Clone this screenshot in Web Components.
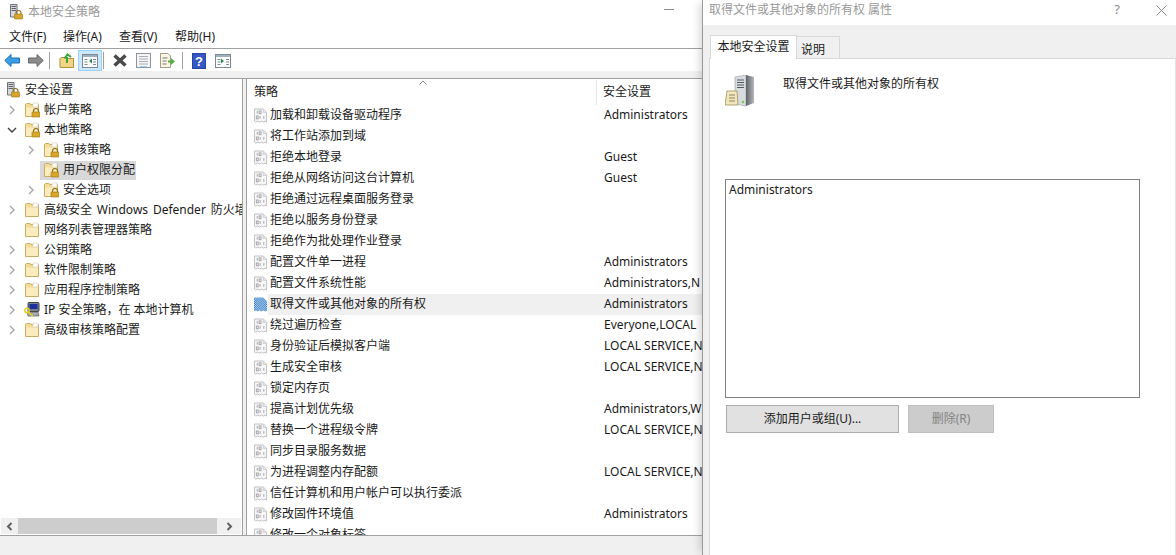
<!DOCTYPE html>
<html lang="zh-CN">
<head>
<meta charset="utf-8">
<title>本地安全策略</title>
<style>
  html, body { margin: 0; height: 100%; overflow: hidden; background: #fff; }
  body { font: 12px/1.2 "Noto Sans", "Noto Sans CJK SC", sans-serif; color: #1a1a1a; }
</style>
</head>
<body>

<secpol-window>
  <tree-row icon="server">安全设置</tree-row>
  <tree-row level="1" arrow="right" icon="lockfolder">帐户策略</tree-row>
  <tree-row level="1" arrow="down" icon="lockfolder">本地策略</tree-row>
  <tree-row level="2" arrow="right" icon="lockfolder">审核策略</tree-row>
  <tree-row level="2" icon="lockfolder" selected>用户权限分配</tree-row>
  <tree-row level="2" arrow="right" icon="lockfolder">安全选项</tree-row>
  <tree-row level="1" arrow="right" icon="folder" style="word-spacing:1.7px">高级安全 Windows Defender 防火墙</tree-row>
  <tree-row level="1" icon="folder">网络列表管理器策略</tree-row>
  <tree-row level="1" arrow="right" icon="folder">公钥策略</tree-row>
  <tree-row level="1" arrow="right" icon="folder">软件限制策略</tree-row>
  <tree-row level="1" arrow="right" icon="folder">应用程序控制策略</tree-row>
  <tree-row level="1" arrow="right" icon="ipsec">IP 安全策略，在 本地计算机</tree-row>
  <tree-row level="1" arrow="right" icon="folder">高级审核策略配置</tree-row>

  <policy-row slot="rows">加载和卸载设备驱动程序<span slot="value">Administrators</span></policy-row>
  <policy-row slot="rows">将工作站添加到域</policy-row>
  <policy-row slot="rows">拒绝本地登录<span slot="value">Guest</span></policy-row>
  <policy-row slot="rows">拒绝从网络访问这台计算机<span slot="value">Guest</span></policy-row>
  <policy-row slot="rows">拒绝通过远程桌面服务登录</policy-row>
  <policy-row slot="rows">拒绝以服务身份登录</policy-row>
  <policy-row slot="rows">拒绝作为批处理作业登录</policy-row>
  <policy-row slot="rows">配置文件单一进程<span slot="value">Administrators</span></policy-row>
  <policy-row slot="rows">配置文件系统性能<span slot="value">Administrators,N</span></policy-row>
  <policy-row slot="rows" selected>取得文件或其他对象的所有权<span slot="value">Administrators</span></policy-row>
  <policy-row slot="rows">绕过遍历检查<span slot="value">Everyone,LOCAL</span></policy-row>
  <policy-row slot="rows">身份验证后模拟客户端<span slot="value">LOCAL SERVICE,N</span></policy-row>
  <policy-row slot="rows">生成安全审核<span slot="value">LOCAL SERVICE,N</span></policy-row>
  <policy-row slot="rows">锁定内存页</policy-row>
  <policy-row slot="rows">提高计划优先级<span slot="value">Administrators,W</span></policy-row>
  <policy-row slot="rows">替换一个进程级令牌<span slot="value">LOCAL SERVICE,N</span></policy-row>
  <policy-row slot="rows">同步目录服务数据</policy-row>
  <policy-row slot="rows">为进程调整内存配额<span slot="value">LOCAL SERVICE,N</span></policy-row>
  <policy-row slot="rows">信任计算机和用户帐户可以执行委派</policy-row>
  <policy-row slot="rows">修改固件环境值<span slot="value">Administrators</span></policy-row>
  <policy-row slot="rows">修改一个对象标签</policy-row>
</secpol-window>

<prop-dialog></prop-dialog>

<script>
const lock = (x, y) => `
  <path d="M${x + 1.5} ${y + 3}v-1a2.5 2.5 0 0 1 5 0v1" fill="none" stroke="#8a6d1c" stroke-width="1.1"/>
  <rect x="${x}" y="${y + 3}" width="8" height="5" rx=".5" fill="#d9a62a" stroke="#9a7412" stroke-width=".6"/>`;

const folderBody = `
  <path d="M1.5 4.5V14.5H14.5V2.5H7L5.8 1.5H2.5L1.5 2.5Z" fill="#f3dc9a" stroke="#c9ab62"/>
  <path d="M2 5.5H14V14H2Z" fill="#fbecbd"/>
  <path d="M9 1h5v4H9z" fill="#fff" stroke="#d6cfb4" stroke-width=".6"/>`;

const ICONS = {
  folder: `<svg width="16" height="16" viewBox="0 0 16 16">${folderBody}</svg>`,
  lockfolder: `<svg width="16" height="16" viewBox="0 0 16 16">${folderBody}${lock(8, 7)}</svg>`,
  server: `<svg width="16" height="16" viewBox="0 0 16 16">
    <path d="M2.5 .5H9V13H2.5Z" fill="#d5d8dc" stroke="#6f7479"/>
    <path d="M3.5 2.5h4.5M3.5 4.5h4.5M3.5 6.5h4.5" stroke="#5f6469"/>${lock(6.5, 7)}</svg>`,
  ipsec: `<svg width="16" height="16" viewBox="0 0 16 16">
    <rect x="4" y=".5" width="11" height="9" rx="1" fill="#7b8088" stroke="#3f4348"/>
    <rect x="5.5" y="2" width="8" height="5" fill="#1c2f9c"/>
    <path d="M3 10h11l1 4H4Z" fill="#a9acaf" stroke="#55585c" stroke-width=".7"/>
    <circle cx="3" cy="8.5" r="2.2" fill="none" stroke="#e6cf1f" stroke-width="1.5"/>
    <path d="M4.5 10l4.5 4.5" stroke="#e6cf1f" stroke-width="1.6"/></svg>`,
  policy: `<svg width="15" height="16" viewBox="0 0 15 16">
    <path d="M.5 .5H10L13.5 4V14.5L12 13.5 10 14.5 8 13.5 6 14.5 4 13.5 2 14.5 .5 13.5Z" fill="#f7f7f8" stroke="#bcbcc0"/>
    <path d="M9.8 .8V4.2H13.2" fill="#e6e6e8" stroke="#c4c4c8" stroke-width=".7"/>
    <g fill="none" stroke="#a2a2a8"><path d="M3.5 2.5v3"/><rect x="5.5" y="2.5" width="2" height="3"/><rect x="2.5" y="8" width="2" height="3"/><path d="M6.5 8v3"/><path d="M10.5 8v3"/></g></svg>`,
  policySelected: `<svg width="15" height="16" viewBox="0 0 15 16">
    <defs><pattern id="chk" width="2" height="2" patternUnits="userSpaceOnUse"><rect width="2" height="2" fill="#cfe4f5"/><rect width="1" height="1" fill="#1f6fbf"/><rect x="1" y="1" width="1" height="1" fill="#1f6fbf"/></pattern></defs>
    <path d="M0 0H10L14 4V14.5L12 15 10 14 8 15 6 14 4 15 2 14 0 15Z" fill="url(#chk)"/></svg>`
};

class SecpolWindow extends HTMLElement {
  constructor() {
    super();
    this.attachShadow({ mode: 'open' }).innerHTML = `
    <style>
      :host { position: absolute; left: 0; top: 0; width: 702px; height: 555px; display: flex; flex-direction: column; background: #f0f0f0; overflow: hidden; }
      .title { height: 25px; flex: none; background: #fff; display: flex; align-items: center; padding-left: 8px; gap: 4px; color: #999; position: relative; }
      .title svg { margin-top: -2px; }
      .title .min { position: absolute; left: 664px; top: 9px; width: 10px; height: 1px; background: #8c8c8c; }
      .main { flex: 1; min-height: 0; display: flex; gap: 3px; border-top: 1px solid #a0a0a0; margin-top: 7px; border-bottom: 1px solid #a0a0a0; margin-bottom: 19px; }
      .tree { width: 242px; flex: none; border-right: 1px solid #a0a0a0; background: #fff; display: flex; flex-direction: column; min-height: 0; }
      .nodes { flex: 1; min-height: 0; overflow: hidden; padding-top: 1px; }
      .list { flex: 1; min-width: 0; border-left: 1px solid #a0a0a0; background: #fff; display: flex; flex-direction: column; overflow: hidden; padding-top: 1px; }
      .head { flex: none; height: 25px; display: flex; position: relative; color: #1a1a1a; }
      .head div { display: flex; align-items: center; padding-bottom: 1px; box-sizing: border-box; }
      .head .c1 { width: 350px; padding-left: 7px; border-right: 1px solid #e5e5e5; }
      .head .c2 { padding-left: 6px; }
      .head svg { position: absolute; left: 172px; top: 0; }
      .rows { flex: 1; min-height: 0; overflow: hidden; }
    </style>
    <div class="title">
      <svg width="16" height="16" viewBox="0 0 16 16">
        <path d="M2.5 .5H9V13H2.5Z" fill="#d5d8dc" stroke="#6f7479"/>
        <path d="M3.5 2.5h4.5M3.5 4.5h4.5M3.5 6.5h4.5" stroke="#5f6469"/>
        <path d="M8 10V9a2.5 2.5 0 0 1 5 0v1" fill="none" stroke="#8a6d1c" stroke-width="1.1"/>
        <rect x="6.5" y="10" width="8" height="5" rx=".5" fill="#d9a62a" stroke="#9a7412" stroke-width=".6"/>
      </svg>
      本地安全策略<span class="min"></span>
    </div>
    <menu-bar></menu-bar>
    <tool-bar></tool-bar>
    <div class="main">
      <div class="tree">
        <div class="nodes"><slot></slot></div>
        <h-scroll></h-scroll>
      </div>
      <div class="list">
        <div class="head">
          <div class="c1">策略</div><div class="c2">安全设置</div>
          <svg width="8" height="5" viewBox="0 0 8 5"><path d="M.5 4.5L4 1l3.5 3.5" fill="none" stroke="#8a8a8a"/></svg>
        </div>
        <div class="rows"><slot name="rows"></slot></div>
      </div>
    </div>`;
  }
}

class MenuBar extends HTMLElement {
  constructor() {
    super();
    this.attachShadow({ mode: 'open' }).innerHTML = `
    <style>
      :host { display: flex; flex: none; height: 24px; box-sizing: border-box; padding: 2px 0 0 9px; align-items: center; background: #fff; border-bottom: 1px solid #a0a0a0; }
      span { width: 56px; }
      span:first-of-type { width: 54px; }
    </style>
    <span>文件(F)</span><span>操作(A)</span><span>查看(V)</span><span>帮助(H)</span>`;
  }
}

class ToolBar extends HTMLElement {
  constructor() {
    super();
    const pane = arrow => `<svg width="16" height="14" viewBox="0 0 16 14">
      <rect x=".5" y=".5" width="15" height="13" fill="#fff" stroke="#7d8a96"/>
      <path d="M1 1h14v2H1z" fill="#9db0c2"/>
      <path d="M2.5 5.5h3M2.5 8h3M2.5 10.5h3M11 5.5h3M11 8h3M11 10.5h3" stroke="#7d8a96"/>${arrow}</svg>`;
    this.attachShadow({ mode: 'open' }).innerHTML = `
    <style>
      :host { display: flex; flex: none; height: 22px; background: #fff; align-items: flex-end; }
      .b { height: 21px; width: 24px; flex: none; display: flex; align-items: center; justify-content: center; box-sizing: border-box; }
      .w23 { width: 23px; }
      .s { width: 1px; height: 17px; background: #a0a0a0; flex: none; margin: 0 5px 2px 2px; }
      .s.b2 { margin-left: 1px; margin-right: 4px; }
      .s.b3 { margin-left: 3px; margin-right: 4px; }
      .on { background: #cce8ff; border: 1px solid #99d1ff; }
    </style>
    <div class="b"><svg width="16" height="13" viewBox="0 0 16 13"><path d="M7 .5L.8 6.5 7 12.5V9h8.5V4H7Z" fill="#3aa0e6" stroke="#1a6fb5"/></svg></div>
    <div class="b w23"><svg width="16" height="13" viewBox="0 0 16 13"><path d="M9 .5l6.2 6L9 12.5V9H.5V4H9Z" fill="#8b8b8b" stroke="#666"/></svg></div>
    <span class="s"></span>
    <div class="b w23"><svg width="16" height="15" viewBox="0 0 16 15"><path d="M1 5.5V14.5H14.5V5.5H7L6 4.5H2Z" fill="#f3d684" stroke="#b2913f"/><path d="M8 10V4M5.5 5.5L8.5 1.5 12 4" fill="none" stroke="#3da33d" stroke-width="2"/></svg></div>
    <div class="b on">${pane('<path d="M10 4.5v5L7 7Z" fill="#2c8f4b"/>')}</div>
    <span class="s b2"></span>
    <div class="b"><svg width="16" height="15" viewBox="0 0 16 15"><path d="M2.5 2.5l11 10M13.5 2.5l-11 10" stroke="#4a4a4a" stroke-width="3.6"/></svg></div>
    <div class="b w23"><svg width="15" height="15" viewBox="0 0 15 15"><rect x=".5" y=".5" width="14" height="14" fill="#f4f5f6" stroke="#8c949c"/><path d="M3 3.5h9M3 6h9M3 8.5h9M3 11h9" stroke="#a6adb4"/><path d="M4 14h7" stroke="#58a6dc"/></svg></div>
    <div class="b"><svg width="16" height="15" viewBox="0 0 16 15"><path d="M1.5 .5H9L11.5 3V14.5H1.5Z" fill="#fbf7e4" stroke="#a09c88"/><path d="M3.5 5h5M3.5 8h4M3.5 11h4" stroke="#777"/><path d="M9 7.5h3V5l4 3.5-4 3.5V9.5H9Z" fill="#55ad43"/></svg></div>
    <span class="s b3"></span>
    <div class="b"><svg width="14" height="16" viewBox="0 0 14 16"><rect width="14" height="16" fill="#2546a8"/><rect x="1" y="1" width="12" height="14" fill="#3557c4"/><text x="7" y="13" font-size="13" font-weight="700" fill="#fff" text-anchor="middle" font-family="Liberation Sans">?</text></svg></div>
    <div class="b w23">${pane('<path d="M6 4.5v5L9 7Z" fill="#2c8f4b"/>')}</div>`;
  }
}

class HScroll extends HTMLElement {
  constructor() {
    super();
    this.attachShadow({ mode: 'open' }).innerHTML = `
    <style>
      :host { display: flex; flex: none; height: 16px; margin: 0 1px 1px; background: #f0f0f0; }
      .a { width: 17px; flex: none; display: flex; align-items: center; justify-content: center; }
      .t { flex: 1; background: #cdcdcd; }
    </style>
    <div class="a"><svg width="7" height="9" viewBox="0 0 7 9"><path d="M5.5 1L2 4.5 5.5 8" fill="none" stroke="#606060" stroke-width="2"/></svg></div>
    <div class="t"></div>
    <div class="a" style="width:24px"><svg width="7" height="9" viewBox="0 0 7 9"><path d="M1.5 1L5 4.5 1.5 8" fill="none" stroke="#606060" stroke-width="2"/></svg></div>`;
  }
}

class TreeRow extends HTMLElement {
  constructor() {
    super();
    this.attachShadow({ mode: 'open' });
  }

  connectedCallback() {
    const level = this.getAttribute('level');
    const arrow = this.getAttribute('arrow');
    const icon = this.getAttribute('icon');
    const left = level ? 5 + 19 * (level - 1) : 5;
    let glyph = '';
    if (arrow === 'right') {
      glyph = '<svg width="7" height="10" viewBox="0 0 7 10"><path d="M1 1l4 4-4 4" fill="none" stroke="#a6a6a6" stroke-width="1.4"/></svg>';
    } else if (arrow === 'down') {
      glyph = '<svg width="10" height="7" viewBox="0 0 10 7"><path d="M1 1l4 4 4-4" fill="none" stroke="#404040" stroke-width="1.4"/></svg>';
    }
    this.shadowRoot.innerHTML = `
    <style>
      :host { display: flex; height: 20px; align-items: center; white-space: nowrap; padding-left: ${left}px; }
      .a { width: 19px; flex: none; display: flex; align-items: center; justify-content: center; padding-right: 5px; box-sizing: border-box; }
      .n { display: flex; align-items: center; height: 19px; gap: 4px; margin-left: -3px; padding: 0 1px 0 3px; }
      .n svg { flex: none; }
      :host([selected]) .n { background: #d9d9d9; }
    </style>
    ${level ? `<span class="a">${glyph}</span>` : ''}
    <span class="n">${ICONS[icon]}<span><slot></slot></span></span>`;
  }
}

class PolicyRow extends HTMLElement {
  constructor() {
    super();
    this.attachShadow({ mode: 'open' });
  }

  connectedCallback() {
    const selected = this.hasAttribute('selected');
    this.shadowRoot.innerHTML = `
    <style>
      :host { display: flex; height: 21px; align-items: center; white-space: nowrap; }
      .ic { flex: none; width: 21px; padding-left: 7px; box-sizing: border-box; display: flex; align-items: center; }
      .c1 { width: 329px; flex: none; box-sizing: border-box; height: 100%; display: flex; align-items: center; padding-left: 2px; }
      .c2 { flex: 1; height: 100%; display: flex; align-items: center; padding-left: 7px; }
      :host([selected]) .c1, :host([selected]) .c2 { background: #f0f0f0; }
    </style>
    <span class="ic">${selected ? ICONS.policySelected : ICONS.policy}</span>
    <span class="c1"><slot></slot></span>
    <span class="c2"><slot name="value"></slot></span>`;
  }
}

class PropDialog extends HTMLElement {
  constructor() {
    super();
    this.attachShadow({ mode: 'open' }).innerHTML = `
    <style>
      :host { position: absolute; left: 702px; top: 0; width: 474px; height: 555px; box-sizing: border-box; border-left: 1px solid #9a9a9a; box-shadow: -6px 0 7px -3px rgba(0,0,0,.14); background: #f0f0f0; display: flex; flex-direction: column; }
      .title { height: 25px; flex: none; background: #fff; display: flex; align-items: center; padding: 0 9px 5px 6px; box-sizing: border-box; color: #999; }
      .title b { font-weight: 400; flex: 1; }
      .title .q { margin-right: 36px; font-size: 13px; color: #8a8a8a; }
      .tabs { display: flex; align-items: flex-end; height: 33px; flex: none; padding-left: 7px; box-sizing: border-box; }
      .tab { height: 22px; display: flex; align-items: center; padding: 5px 0 0 4px; border: 1px solid #d9d9d9; border-bottom: 0; background: #f0f0f0; box-sizing: border-box; width: 44px; margin-left: -1px; }
      .tab.on { background: #fff; width: 87px; height: 24px; margin-left: 0; padding: 0; justify-content: center; position: relative; top: 1px; z-index: 1; }
      .panel { flex: 1; margin-left: 6px; margin-right: 0; background: #fff; border: 1px solid #d9d9d9; border-bottom: 0; border-right: 1px solid #e4e4e4; padding: 16px 35px 0 15px; }
      .top { display: flex; gap: 27px; height: 104px; }
      .top span { margin-top: 2px; }
      .box { height: 219px; box-sizing: border-box; border: 1px solid #828282; padding: 3px 3px; }
      .btns { display: flex; gap: 9px; margin-top: 7px; padding-left: 1px; }
      .btn { height: 28px; box-sizing: border-box; display: flex; align-items: center; justify-content: center; border: 1px solid #adadad; background: #e1e1e1; }
      .add { width: 173px; }
      .del { width: 86px; background: #cccccc; border-color: #bfbfbf; color: #838383; }
    </style>
    <div class="title"><b>取得文件或其他对象的所有权 属性</b><span class="q">?</span>
      <svg width="11" height="11" viewBox="0 0 11 11"><path d="M.5.5l10 10M10.5.5l-10 10" stroke="#8a8a8a"/></svg></div>
    <div class="tabs"><div class="tab on">本地安全设置</div><div class="tab">说明</div></div>
    <div class="panel">
      <div class="top">
        <svg width="31" height="33" viewBox="0 0 31 33">
          <defs><linearGradient id="side" x1="0" x2="1" y1="0" y2="0"><stop offset="0" stop-color="#5f6368"/><stop offset="1" stop-color="#b4b8bc"/></linearGradient></defs>
          <path d="M10 2L21 0V31L10 29Z" fill="#d9dcdf" stroke="#9a9ea3" stroke-width=".6"/>
          <path d="M21 0L29 2V28L21 31Z" fill="url(#side)"/>
          <path d="M12 5h7M12 7.5h7M12 10h7M12 12.5h7" stroke="#555a60"/><circle cx="18" cy="27" r="1.2" fill="#7ac943"/>
          <path d="M2 16H12L13 30H0Z" fill="#f2e6bd" stroke="#a08f58" stroke-width=".8"/>
          <path d="M4 20h6M4 23h6M4 26h6" stroke="#8c8460"/>
        </svg>
        <span>取得文件或其他对象的所有权</span>
      </div>
      <div class="box">Administrators</div>
      <div class="btns"><div class="btn add">添加用户或组(U)...</div><div class="btn del">删除(R)</div></div>
    </div>`;
  }
}

customElements.define('secpol-window', SecpolWindow);
customElements.define('menu-bar', MenuBar);
customElements.define('tool-bar', ToolBar);
customElements.define('h-scroll', HScroll);
customElements.define('tree-row', TreeRow);
customElements.define('policy-row', PolicyRow);
customElements.define('prop-dialog', PropDialog);
</script>
</body>
</html>
